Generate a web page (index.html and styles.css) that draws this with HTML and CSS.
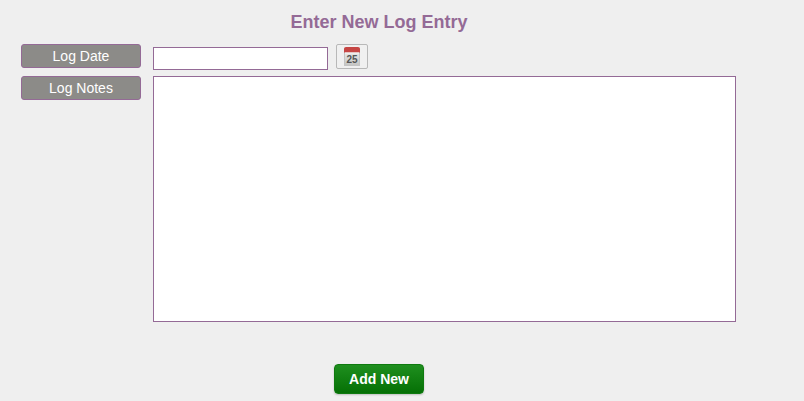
FILE: index.html
```html
<!DOCTYPE html>
<html lang="en">
<head>
    <meta charset="UTF-8">
    <title>Enter New Log Entry</title>
    <link rel="stylesheet" href="styles.css">
</head>
<body>
    <form class="log-form">
        <h1>Enter New Log Entry</h1>
        <div class="form-row date-row">
            <label class="field-label" for="logDate">Log Date</label>
            <input type="text" id="logDate" class="date-input">
            <button type="button" class="calendar-btn" aria-label="Pick date">
                <svg width="16" height="19" viewBox="0 0 16 19">
                    <defs>
                        <linearGradient id="pageFade" x1="0" y1="0" x2="0" y2="1">
                            <stop offset="0" stop-color="#f4f4f2"/>
                            <stop offset="1" stop-color="#c4c4c2"/>
                        </linearGradient>
                    </defs>
                    <rect x="0.5" y="1.5" width="15" height="17" fill="url(#pageFade)" stroke="#c4c4c4"/>
                    <path d="M0 5.5V2a2 2 0 0 1 2-2h12a2 2 0 0 1 2 2v3.5z" fill="#c64644"/>
                    <rect x="1" y="5.5" width="14" height="1" fill="#f6f6f4"/>
                    <text x="8" y="16" class="calendar-day">25</text>
                </svg>
            </button>
        </div>
        <div class="form-row notes-row">
            <label class="field-label" for="logNotes">Log Notes</label>
            <textarea id="logNotes" class="notes-input"></textarea>
        </div>
        <div class="form-actions">
            <button type="button" class="add-btn">Add New</button>
        </div>
    </form>
</body>
</html>
```

FILE: styles.css
```css
* {
    box-sizing: border-box;
}

html, body {
    height: 100%;
    overflow: hidden;
}

body {
    margin: 0;
    background: #efefef;
    font-family: "Liberation Sans", Arial, sans-serif;
}

.log-form {
    width: 758px;
    padding-top: 11px;
}

h1 {
    margin: 0 0 11px;
    color: #946a96;
    font-size: 18px;
    line-height: 22px;
    font-weight: bold;
    text-align: center;
}

.form-row {
    display: flex;
    align-items: flex-start;
    padding-left: 21px;
}

.date-row {
    height: 32px;
}

.field-label {
    width: 120px;
    height: 24px;
    margin-right: 12px;
    background: #8c8b88;
    border: 1px solid #946a96;
    border-radius: 3px;
    color: #ffffff;
    font-size: 14px;
    line-height: 22px;
    text-align: center;
}

.date-input {
    width: 175px;
    height: 23px;
    margin-top: 3px;
    margin-right: 8px;
    background: #ffffff;
    border: 1px solid #946a96;
    border-radius: 0;
    padding: 0 4px;
}

.calendar-btn {
    display: flex;
    align-items: center;
    justify-content: center;
    width: 32px;
    height: 25px;
    padding: 0;
    background: #f0f0f0;
    border: 1px solid #b8b8b8;
    border-radius: 2px;
}

.calendar-day {
    fill: #555555;
    font-family: "Liberation Sans", Arial, sans-serif;
    font-size: 10px;
    font-weight: bold;
    text-anchor: middle;
}

.notes-input {
    display: block;
    width: 583px;
    height: 246px;
    background: #ffffff;
    border: 1px solid #946a96;
    border-radius: 0;
    resize: none;
}

.form-actions {
    display: flex;
    justify-content: center;
    margin-top: 42px;
}

.add-btn {
    width: 90px;
    height: 30px;
    padding: 0;
    background: linear-gradient(to bottom, #1f8f1f 0%, #057005 100%);
    border: 1px solid #0f7a0f;
    border-radius: 4px;
    box-shadow: 0 1px 2px rgba(0, 0, 0, 0.2);
    color: #ffffff;
    font-family: "Liberation Sans", Arial, sans-serif;
    font-size: 14px;
    font-weight: bold;
}
```
